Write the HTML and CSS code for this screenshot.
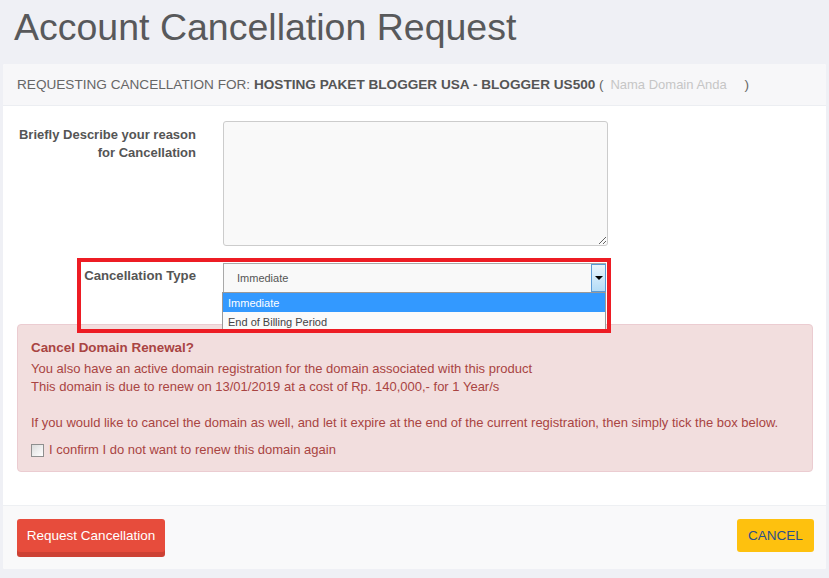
FILE: index.html
```html
<!DOCTYPE html>
<html lang="en">
<head>
    <meta charset="UTF-8">
    <title>Account Cancellation Request</title>
    <link rel="stylesheet" href="styles.css">
</head>
<body>
    <h1 class="title">Account Cancellation Request</h1>

    <div class="panel">
        <!-- Product being cancelled -->
        <div class="panel-head">
            <span>REQUESTING CANCELLATION FOR:&nbsp;</span>
            <b>HOSTING PAKET BLOGGER USA - BLOGGER US500</b>
            <span>&nbsp;(&nbsp;</span>
            <span class="domain">Nama Domain Anda</span>
            <span>&nbsp;)</span>
        </div>

        <div class="panel-body">
            <div class="form-row">
                <label class="form-label" for="reason">Briefly Describe your reason for Cancellation</label>
                <textarea id="reason" class="reason"></textarea>
            </div>

            <div class="form-row type-row">
                <label class="form-label">Cancellation Type</label>
                <div class="select-wrap">
                    <div class="select">
                        <span>Immediate</span>
                        <span class="select-arrow"></span>
                    </div>
                    <ul class="select-list">
                        <li class="active">Immediate</li>
                        <li>End of Billing Period</li>
                    </ul>
                </div>
                <div class="highlight"></div>
            </div>

            <!-- Domain renewal notice -->
            <div class="alert">
                <div class="alert-title">Cancel Domain Renewal?</div>
                <p>You also have an active domain registration for the domain associated with this product<br>
                This domain is due to renew on 13/01/2019 at a cost of Rp. 140,000,- for 1 Year/s<br>
                <br>
                If you would like to cancel the domain as well, and let it expire at the end of the current registration, then simply tick the box below.</p>
                <label class="confirm"><span class="check"></span>I confirm I do not want to renew this domain again</label>
            </div>
        </div>

        <div class="panel-foot">
            <button class="btn btn-danger">Request Cancellation</button>
            <button class="btn btn-warning">CANCEL</button>
        </div>
    </div>
</body>
</html>
```

FILE: styles.css
```css
body {
    margin: 0;
    padding: 0 3px 9px;
    background-color: #eff0f5;
    font-family: 'Liberation Sans', Arial, sans-serif;
    color: #555;
}

.title {
    margin: 0;
    height: 64px;
    padding: 5px 11px 0;
    box-sizing: border-box;
    font-size: 37.5px;
    font-weight: normal;
    line-height: 44px;
    color: #58595b;
}

.panel {
    background-color: #fff;
    border-radius: 2px;
}

.panel-head {
    display: flex;
    align-items: center;
    height: 41px;
    padding: 0 14px;
    background-color: #f7f7f9;
    border-bottom: 1px solid #eceef2;
    border-radius: 2px 2px 0 0;
    font-size: 13.6px;
    color: #666;
}

.panel-head b {
    color: #555;
}

.panel-head .domain {
    font-size: 13px;
    color: #c6c6c6;
    margin-left: 3px;
    margin-right: 14px;
}

.panel-body {
    padding: 15px 13px 33px 14px;
}

.form-row {
    display: grid;
    grid-template-columns: 179px 385px;
    column-gap: 27px;
    margin-bottom: 17px;
}

.form-label {
    padding-top: 5px;
    font-size: 13px;
    font-weight: bold;
    line-height: 18px;
    text-align: right;
    color: #555;
}

.reason {
    height: 125px;
    margin: 0;
    box-sizing: border-box;
    background-color: #f9f9f9;
    border: 1px solid #ccc;
    border-radius: 3px;
}

.type-row {
    position: relative;
    margin-bottom: 32px;
}

.type-row .form-label {
    padding-top: 4px;
    font-size: 13.2px;
}

.select-wrap {
    position: relative;
    width: 383px;
}

.select {
    display: flex;
    justify-content: space-between;
    align-items: center;
    height: 29px;
    padding-left: 13px;
    box-sizing: border-box;
    background-color: #f9f9f9;
    border: 1px solid #a9a9a9;
    border-right: none;
    border-bottom: none;
    font-size: 11px;
    color: #555;
}

.select-arrow {
    position: relative;
    width: 15px;
    height: 28px;
    box-sizing: border-box;
    border: 1px solid #5a9ad6;
    background: linear-gradient(#eaf5fd, #b4dcf7);
}

.select-arrow::after {
    content: "";
    position: absolute;
    left: 3px;
    top: 11px;
    border-left: 4px solid transparent;
    border-right: 4px solid transparent;
    border-top: 4px solid #000;
}

.select-list {
    position: absolute;
    top: 29px;
    left: -1px;
    width: 382px;
    margin: 0;
    padding: 0;
    list-style: none;
    background-color: #fafafa;
    border: 1px solid #999;
    z-index: 2;
    font-size: 11px;
    color: #444;
}

.select-list li {
    height: 19px;
    line-height: 20px;
    padding-left: 5px;
}

.select-list li.active {
    background-color: #3399ff;
    color: #fff;
}

.highlight {
    position: absolute;
    left: 60px;
    top: -5px;
    width: 526px;
    height: 67px;
    border: 4px solid #ed1c24;
    z-index: 3;
}

.alert {
    position: relative;
    padding: 14px 13px 12px;
    background-color: #f2dede;
    border: 1px solid #ebccd1;
    border-radius: 4px;
    font-size: 13px;
    line-height: 18px;
    color: #a94442;
}

.alert-title {
    font-size: 13.4px;
    font-weight: bold;
    margin-bottom: 3px;
}

.alert p {
    margin: 0 0 9px;
}

.confirm {
    display: flex;
    align-items: center;
}

.check {
    width: 11px;
    height: 11px;
    margin-right: 5px;
    border: 1px solid #8f8f8f;
    background: linear-gradient(135deg, #dcdcdc, #fff);
}

.panel-foot {
    display: flex;
    justify-content: space-between;
    align-items: flex-start;
    height: 64px;
    padding: 13px 12px 0 14px;
    box-sizing: border-box;
    background-color: #f9f9fa;
    border-top: 1px solid #eef0f3;
    border-radius: 0 0 2px 2px;
}

.btn {
    height: 33px;
    border: none;
    border-radius: 3px;
    font-family: 'Liberation Sans', Arial, sans-serif;
    font-size: 13.5px;
    cursor: pointer;
}

.btn-danger {
    width: 148px;
    background-color: #e74c3c;
    box-shadow: 0 5px 0 #cd4134;
    color: #fff;
}

.btn-warning {
    width: 77px;
    background-color: #fec10e;
    color: #2c4f8a;
}
```
